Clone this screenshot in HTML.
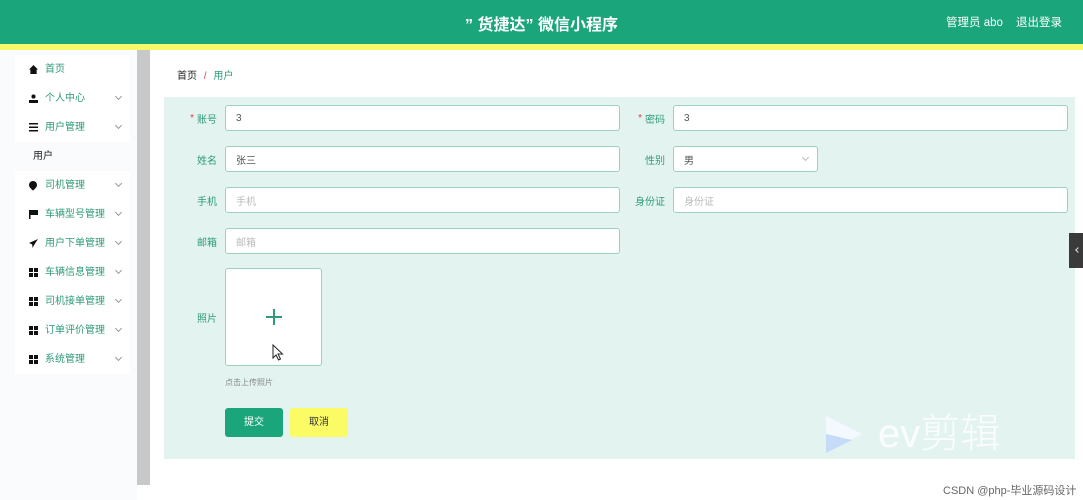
<!DOCTYPE html>
<html><head><meta charset="utf-8">
<style>
*{margin:0;padding:0;box-sizing:border-box}
body{width:1083px;height:500px;overflow:hidden;background:#fff;font-family:"Liberation Sans","Noto Sans CJK SC",sans-serif;position:relative}
.hd{position:absolute;left:0;top:0;width:1083px;height:44px;background:#1aa57a}
.yl{position:absolute;left:0;top:44px;width:1083px;height:6px;background:#f7f76a}
.title{position:absolute;left:0;width:1083px;top:11px;text-align:center;color:#fff;font-size:16px;font-weight:bold}
.hr{position:absolute;top:14px;color:#fff;font-size:11.5px}
.side{position:absolute;left:0;top:50px;width:137px;height:450px;background:#fafbfd}
.bar{position:absolute;left:137px;top:50px;width:13px;height:435px;background:#c8c8c8}
.mi{position:absolute;left:15px;width:115px;height:29px;background:#fff;font-size:10px;color:#2f9a7a;line-height:29px}
.mi .ic{position:absolute;left:14px;top:10px;width:9px;height:9px}
.mi .t{position:absolute;left:30px}
.mi .ar{position:absolute;left:101px;top:10px;width:5px;height:5px;border-right:1px solid #999;border-bottom:1px solid #999;transform:rotate(45deg)}
.grid{background:
linear-gradient(#111,#111) 0 0/4px 4px no-repeat,linear-gradient(#111,#111) 5px 0/4px 4px no-repeat,linear-gradient(#111,#111) 0 5px/4px 4px no-repeat,linear-gradient(#111,#111) 5px 5px/4px 4px no-repeat}
.panel{position:absolute;left:164px;top:97px;width:911px;height:362px;background:#e3f4f0}
.lb{position:absolute;font-size:10px;color:#2f9a7a;width:60px;height:26px;display:flex;align-items:center;justify-content:flex-end}
.in{position:absolute;height:26px;background:#fff;border:1px solid #9fcfc0;border-radius:3px;font-size:10px;display:flex;align-items:center;padding-left:10px;color:#555}
.ph{color:#bbb}
.req{color:#e04040;margin-right:3px}
</style></head><body>
<div class="hd"></div><div class="yl"></div>
<div class="title">” 货捷达” 微信小程序</div>
<div class="hr" style="left:946px">管理员 abo</div>
<div class="hr" style="left:1016px">退出登录</div>
<div class="side"></div><div class="bar"></div>

<div class="mi" style="top:55px"><div class="ic" style="background:#111;clip-path:polygon(50% 0,100% 50%,85% 50%,85% 100%,15% 100%,15% 50%,0 50%)"></div><span class="t">首页</span></div>
<div class="mi" style="top:84px"><div class="ic" style="background:radial-gradient(circle at 50% 28%,#111 26%,transparent 28%),linear-gradient(#111,#111) 0 6px/9px 3px no-repeat"></div><span class="t">个人中心</span><div class="ar"></div></div>
<div class="mi" style="top:113px"><div class="ic" style="background:repeating-linear-gradient(#111 0 1.5px,transparent 1.5px 3.5px)"></div><span class="t">用户管理</span><div class="ar"></div></div>
<div class="mi" style="top:142px;background:#fafbfd;color:#222"><span class="t" style="left:18px">用户</span></div>
<div class="mi" style="top:171px"><div class="ic" style="background:#111;border-radius:50% 50% 50% 0;transform:rotate(-45deg);width:8px;height:8px"></div><span class="t">司机管理</span><div class="ar"></div></div>
<div class="mi" style="top:200px"><div class="ic" style="background:linear-gradient(#111,#111) 0 0/1.5px 9px no-repeat,linear-gradient(#111,#111) 1px 0/8px 5px no-repeat"></div><span class="t">车辆型号管理</span><div class="ar"></div></div>
<div class="mi" style="top:229px"><div class="ic" style="background:#111;clip-path:polygon(100% 0,0 45%,35% 60%,40% 100%,55% 70%)"></div><span class="t">用户下单管理</span><div class="ar"></div></div>
<div class="mi" style="top:258px"><div class="ic grid"></div><span class="t">车辆信息管理</span><div class="ar"></div></div>
<div class="mi" style="top:287px"><div class="ic grid"></div><span class="t">司机接单管理</span><div class="ar"></div></div>
<div class="mi" style="top:316px"><div class="ic grid"></div><span class="t">订单评价管理</span><div class="ar"></div></div>
<div class="mi" style="top:345px"><div class="ic grid"></div><span class="t">系统管理</span><div class="ar"></div></div>

<div style="position:absolute;left:177px;top:67px;font-size:10px;color:#222">首页 <span style="color:#e04040;margin:0 4px">/</span> <span style="color:#2f9a7a">用户</span></div>

<div class="panel"></div>
<div class="lb" style="left:157px;top:105px"><span class="req">*</span>账号</div>
<div class="in" style="left:225px;top:105px;width:395px">3</div>
<div class="lb" style="left:605px;top:105px"><span class="req">*</span>密码</div>
<div class="in" style="left:673px;top:105px;width:395px">3</div>
<div class="lb" style="left:157px;top:146px">姓名</div>
<div class="in" style="left:225px;top:146px;width:395px">张三</div>
<div class="lb" style="left:605px;top:146px">性别</div>
<div class="in" style="left:673px;top:146px;width:145px">男<span style="position:absolute;left:129px;top:8px;width:5px;height:5px;border-right:1px solid #bbb;border-bottom:1px solid #bbb;transform:rotate(45deg)"></span></div>
<div class="lb" style="left:157px;top:187px">手机</div>
<div class="in ph" style="left:225px;top:187px;width:395px">手机</div>
<div class="lb" style="left:605px;top:187px">身份证</div>
<div class="in ph" style="left:673px;top:187px;width:395px">身份证</div>
<div class="lb" style="left:157px;top:228px">邮箱</div>
<div class="in ph" style="left:225px;top:228px;width:395px">邮箱</div>
<div class="lb" style="left:157px;top:304px">照片</div>
<div style="position:absolute;left:225px;top:268px;width:97px;height:98px;background:#fff;border:1px solid #9fcfc0;border-radius:3px"></div>
<div style="position:absolute;left:266px;top:316px;width:16px;height:1.5px;background:#2f9a7a"></div>
<div style="position:absolute;left:273px;top:309px;width:1.5px;height:16px;background:#2f9a7a"></div>
<svg style="position:absolute;left:272px;top:344px" width="12" height="17" viewBox="0 0 12 17"><path d="M1 1 L1 14 L4 11 L6.5 16 L8.5 15 L6 10 L10.5 10 Z" fill="#fff" stroke="#222" stroke-width="1"/></svg>
<div style="position:absolute;left:225px;top:377px;font-size:8px;color:#888">点击上传照片</div>
<div style="position:absolute;left:225px;top:408px;width:58px;height:29px;background:#1aa57a;border-radius:3px;color:#fff;font-size:10px;text-align:center;line-height:29px">提交</div>
<div style="position:absolute;left:290px;top:408px;width:58px;height:29px;background:#fbfb66;border-radius:3px;color:#333;font-size:10px;text-align:center;line-height:29px">取消</div>

<div style="position:absolute;left:1069px;top:233px;width:14px;height:35px;background:#3a3a3a"></div>
<div style="position:absolute;left:1076px;top:248px;width:4px;height:4px;border-left:1px solid #ddd;border-bottom:1px solid #ddd;transform:rotate(45deg)"></div>

<svg style="position:absolute;left:822px;top:412px" width="44" height="45" viewBox="0 0 44 45"><path d="M4 4 L40 22 L4 41 Z" fill="#f4faff" opacity="0.9"/><path d="M4 22 L4 41 L30 28 Z" fill="#b9d3f5" opacity="0.8"/></svg>
<div style="position:absolute;left:878px;top:410px;font-size:40px;color:#fff;opacity:0.85;line-height:48px;font-weight:300">ev剪辑</div>
<div style="position:absolute;left:943px;top:482px;font-size:11px;color:#666">CSDN @php-毕业源码设计</div>
</body></html>
